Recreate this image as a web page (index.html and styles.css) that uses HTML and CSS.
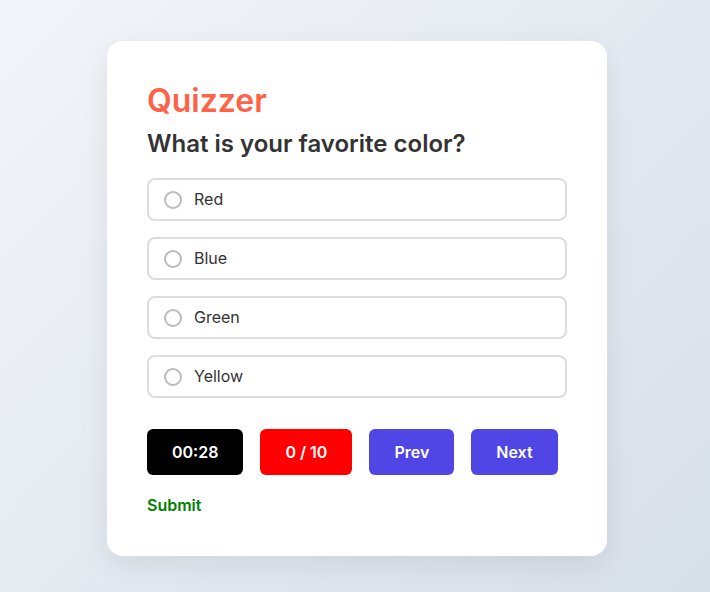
FILE: index.html
```html
<!DOCTYPE html>
<html lang="en">
<head>
<meta charset="utf-8">
<title>Quizzer</title>
<link rel="stylesheet" href="styles.css">
</head>
<body>
  <main class="card">
    <h1 class="title">Quizzer</h1>
    <h2 class="question">What is your favorite color?</h2>
    <div class="options">
      <label class="option"><input type="radio" name="color" class="radio"><span>Red</span></label>
      <label class="option"><input type="radio" name="color" class="radio"><span>Blue</span></label>
      <label class="option"><input type="radio" name="color" class="radio"><span>Green</span></label>
      <label class="option"><input type="radio" name="color" class="radio"><span>Yellow</span></label>
    </div>
    <div class="controls">
      <div class="pill timer">00:28</div>
      <div class="pill score">0 / 10</div>
      <button class="pill nav">Prev</button>
      <button class="pill nav">Next</button>
    </div>
    <button class="submit">Submit</button>
  </main>
</body>
</html>
```

FILE: styles.css
```css
* { box-sizing: border-box; }

html, body { height: 100%; }

body {
  margin: 0;
  padding: 5px 0 0 4px;
  min-height: 100vh;
  display: flex;
  align-items: center;
  justify-content: center;
  font-family: Inter, "Noto Sans", sans-serif;
  background: linear-gradient(135deg, #f2f5f9 0%, #d7dfe9 100%);
}

.card {
  width: 500px;
  background: #fff;
  border-radius: 16px;
  padding: 41px 40px 41px;
  box-shadow: 0 10px 30px rgba(0, 0, 0, 0.08);
}

.title {
  margin: 0;
  font-size: 32px;
  font-weight: 600;
  color: #ff6347;
  line-height: 1.2;
}

.question {
  margin: 10px 0 19px;
  font-size: 24px;
  font-weight: 600;
  color: #333;
  line-height: 1.2;
}

.options {
  display: flex;
  flex-direction: column;
  gap: 16px;
}

.option {
  display: flex;
  align-items: center;
  gap: 12px;
  padding: 10px 15px;
  border: 2px solid #ddd;
  border-radius: 8px;
  font-size: 16px;
  color: #333;
  line-height: 19px;
  cursor: pointer;
}

.radio {
  appearance: none;
  -webkit-appearance: none;
  width: 18px;
  height: 18px;
  margin: 0;
  border: 2px solid #bbb;
  border-radius: 50%;
  background: #fff;
  flex: none;
}

.controls {
  display: flex;
  gap: 17px;
  margin-top: 31px;
}

.pill {
  border: 0;
  border-radius: 6px;
  padding: 13px 25px;
  font-family: inherit;
  font-size: 16px;
  font-weight: 600;
  line-height: 20px;
  color: #fff;
}

.timer { background: #000; }
.score { background: #f00; }
.nav { background: #4f46e5; cursor: pointer; }

.submit {
  display: block;
  margin-top: 21px;
  padding: 0;
  border: 0;
  background: none;
  font-family: inherit;
  font-size: 16px;
  font-weight: 600;
  line-height: 19px;
  color: #008000;
  cursor: pointer;
}
```
